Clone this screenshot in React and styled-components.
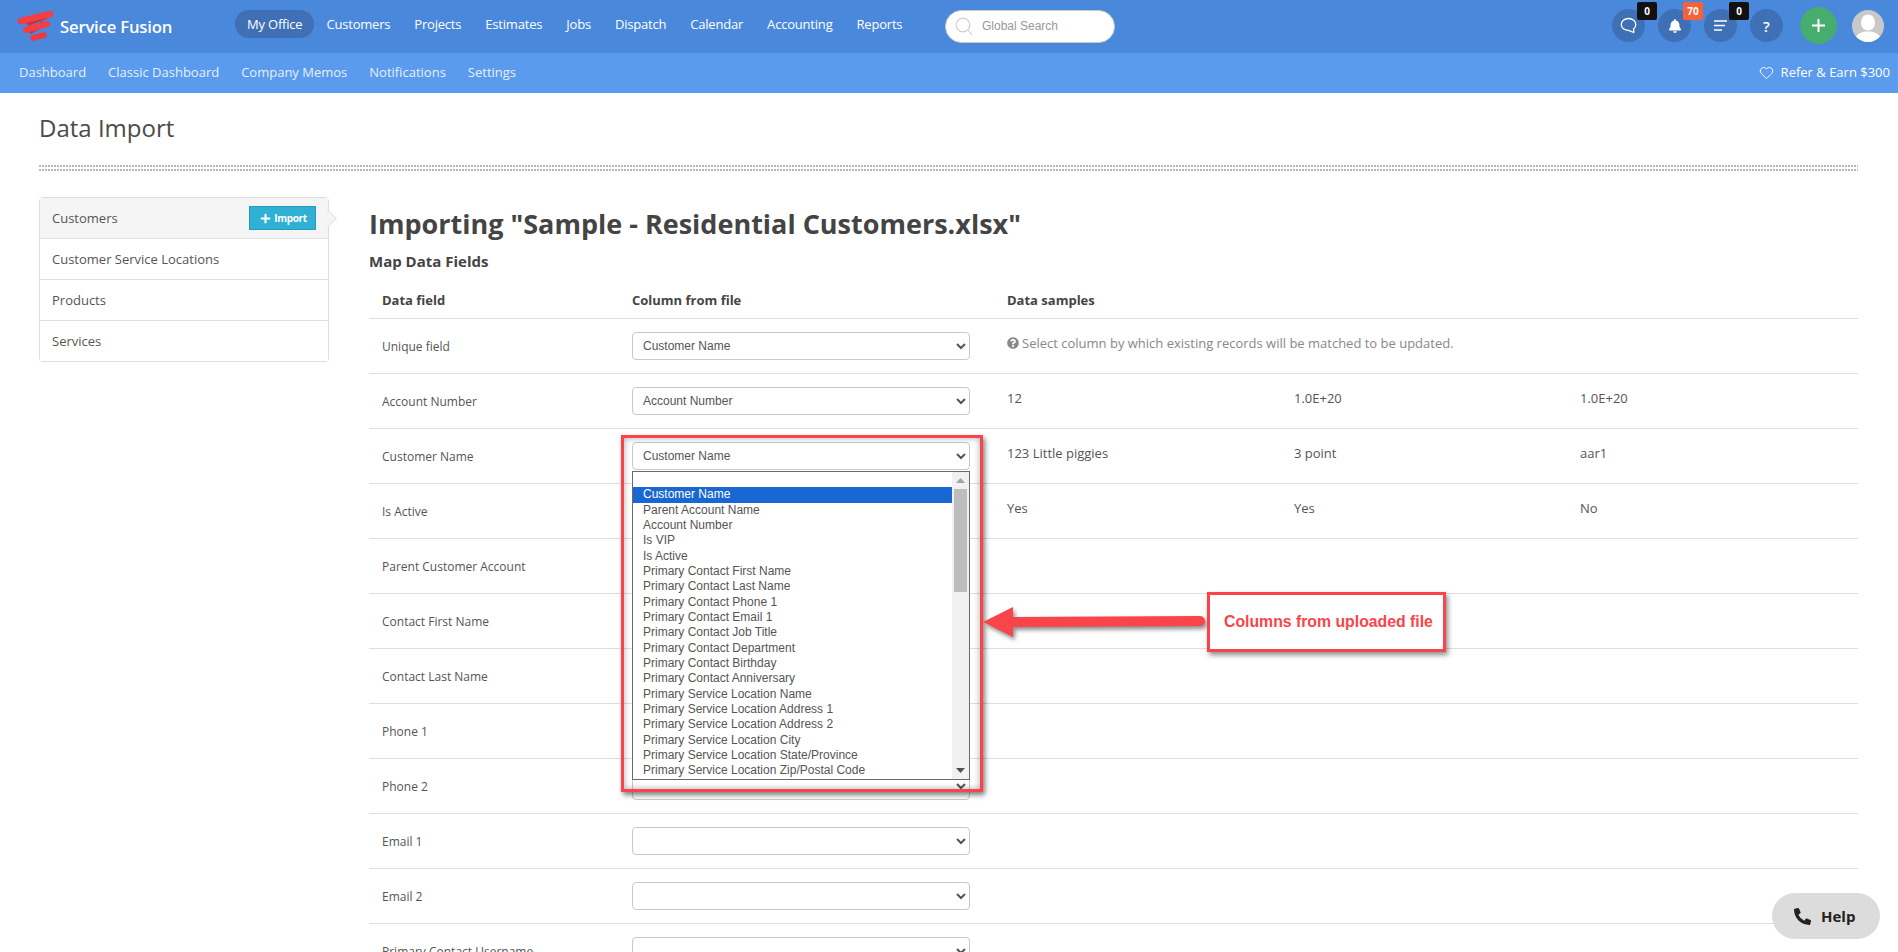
import React from 'react';
import styled, { createGlobalStyle } from 'styled-components';
import { FaBell, FaPhoneAlt, FaPlus, FaQuestionCircle } from 'react-icons/fa';
import { Heart } from 'lucide-react';

const GlobalStyle = createGlobalStyle`
  html, body {
    margin: 0;
    height: 100%;
    overflow: hidden;
    background: #fff;
    font-family: "Open Sans", sans-serif;
    color: #555;
  }
  * { box-sizing: border-box; }
`;

const Page = styled.div`
  position: relative;
  height: 952px;
  overflow: hidden;
`;

const TopBar = styled.header`
  display: flex;
  align-items: center;
  height: 53px;
  background: #4a88dc;
  padding-right: 14px;
`;

const Logo = styled.div`
  flex: 0 0 235px;
  display: flex;
  align-items: center;
  gap: 6px;
  padding-left: 17px;
  color: #fff;
  font-size: 16.7px;
  font-weight: 600;
  letter-spacing: -0.2px;
`;

const MainNav = styled.nav`
  flex: 0 0 710px;
  display: flex;
  align-items: center;
`;

const NavItem = styled.a`
  height: 28px;
  padding: 0 12px;
  border-radius: 14px;
  display: flex;
  align-items: center;
  margin-top: -6px;
  font-size: 13px;
  letter-spacing: -0.2px;
  color: #fff;
  background: ${p => (p.$active ? '#3f70b6' : 'transparent')};
`;

const Search = styled.div`
  width: 170px;
  height: 33px;
  margin-top: -1px;
  display: flex;
  align-items: center;
  gap: 9px;
  padding-left: 9px;
  background: #fff;
  border: 1px solid #ccc;
  border-radius: 17px;
  font-family: "Liberation Sans", sans-serif;
  font-size: 12px;
  color: #999;
`;

const TopRight = styled.div`
  margin-left: auto;
  margin-bottom: 2px;
  display: flex;
  align-items: center;
`;

const Round = styled.div`
  position: relative;
  width: 33px;
  height: 33px;
  margin-left: 13px;
  border-radius: 50%;
  background: #3f70b6;
  color: #fff;
  display: flex;
  align-items: center;
  justify-content: center;
  font-size: 15px;
  font-weight: 600;
`;

const Badge = styled.span`
  position: absolute;
  top: -7px;
  right: -12px;
  width: 20px;
  height: 18px;
  border-radius: 2px;
  background: ${p => p.$bg || '#111'};
  color: #fff;
  font-size: 10px;
  font-weight: 700;
  display: flex;
  align-items: center;
  justify-content: center;
`;

const AddButton = styled.div`
  width: 37px;
  height: 37px;
  margin-left: 17px;
  border-radius: 50%;
  background: #45ad6d;
  color: #fff;
  display: flex;
  align-items: center;
  justify-content: center;
`;

const Avatar = styled.div`
  width: 32px;
  height: 32px;
  margin-left: 15px;
  border-radius: 50%;
  overflow: hidden;
  background: #c9c9c9;
`;

const SubBar = styled.div`
  display: flex;
  align-items: center;
  height: 40px;
  padding: 0 8px 2px 19px;
  background: #5b9bed;
  font-size: 13px;
  color: #e6f0fc;
`;

const SubNav = styled.nav`
  display: flex;
  gap: 22px;
`;

const Refer = styled.div`
  margin-left: auto;
  display: flex;
  align-items: center;
  gap: 7px;
  font-size: 13px;
  color: #fff;
`;

const Content = styled.div`
  padding: 19px 40px 0 39px;
`;

const PageTitle = styled.h1`
  margin: 0;
  font-size: 24px;
  line-height: 32px;
  font-weight: 400;
  color: #4b4b4b;
`;

const Dots = styled.div`
  height: 8px;
  margin-top: 21px;
  background-image: radial-gradient(circle at 1px 1px, #b8b8b8 0.8px, transparent 1.1px);
  background-size: 3px 4px;
`;

const Columns = styled.div`
  display: flex;
  gap: 40px;
  margin-top: 24px;
`;

const SideMenu = styled.ul`
  flex: 0 0 290px;
  align-self: flex-start;
  margin: 0;
  padding: 0;
  list-style: none;
  border: 1px solid #ddd;
  border-radius: 4px;
`;

const SideItem = styled.li`
  position: relative;
  height: 41px;
  display: flex;
  align-items: center;
  justify-content: space-between;
  padding: 0 12px 0 12px;
  font-size: 13px;
  color: #555;
  background: ${p => (p.$active ? '#f5f5f5' : '#fff')};
  border-bottom: 1px solid #ddd;
  &:last-child { border-bottom: 0; height: 40px; }
  ${p => p.$active && `
    &::after {
      content: '';
      position: absolute;
      right: -6px;
      top: 14px;
      width: 12px;
      height: 12px;
      background: #f5f5f5;
      border-top: 1px solid #e4e4e4;
      border-right: 1px solid #e4e4e4;
      transform: rotate(45deg);
    }
  `}
`;

const ImportButton = styled.button`
  width: 67px;
  height: 24px;
  display: flex;
  align-items: center;
  justify-content: center;
  gap: 3px;
  padding: 0 0 0 2px;
  background: #31b0d5;
  border: 1px solid #269abc;
  color: #fff;
  font-family: inherit;
  font-size: 10px;
  font-weight: 700;
  letter-spacing: -0.3px;
`;

const Main = styled.main`
  flex: 1;
  min-width: 0;
`;

const Heading = styled.h2`
  margin: 7px 0 0;
  font-size: 27px;
  line-height: 40px;
  font-weight: 700;
  color: #444;
`;

const SubHeading = styled.h3`
  margin: 7px 0 0;
  font-size: 15px;
  line-height: 20px;
  font-weight: 700;
  color: #444;
`;

const Row = styled.div`
  display: grid;
  grid-template-columns: 263px 375px 287px 286px 1fr;
  align-items: center;
  height: ${p => (p.$head ? '48px' : '55px')};
  padding-top: ${p => (p.$head ? '11px' : '0')};
  border-bottom: 1px solid #ddd;
  font-size: 12px;
  color: #555;
`;

const HeadCell = styled.div`
  font-size: 13px;
  font-weight: 700;
  color: #444;
  padding-left: ${p => (p.$first ? '13px' : '0')};
`;

const FieldName = styled.div`
  padding-left: 13px;
`;

const ColumnSelect = styled.select`
  display: block;
  width: 338px;
  height: 28px;
  padding: 0 6px;
  background: #fff;
  border: 1px solid #c8c8c8;
  border-radius: 4px;
  font-family: "Liberation Sans", sans-serif;
  font-size: 12px;
  color: #555;
`;

const Sample = styled.div`
  padding-bottom: 7px;
  font-size: 13px;
  color: #555;
`;

const Hint = styled.div`
  grid-column: 3 / 6;
  display: flex;
  align-items: center;
  gap: 3px;
  padding-bottom: 7px;
  font-size: 13px;
  color: #888;
`;

const RedFrame = styled.div`
  position: absolute;
  left: 621px;
  top: 435px;
  width: 362px;
  height: 357px;
  padding: 33px 0 0 8px;
  border: 3px solid #f9444a;
  box-shadow: 2px 3px 5px rgba(0, 0, 0, 0.5), inset 0 0 6px rgba(0, 0, 0, 0.35);
`;

const ListBox = styled.div`
  display: flex;
  width: 338px;
  height: 309px;
  background: #fff;
  border: 1px solid #6a6a6a;
  font-family: "Liberation Sans", sans-serif;
  font-size: 12px;
  color: #555;
`;

const Options = styled.div`
  flex: 1;
  overflow: hidden;
`;

const Option = styled.div`
  height: 15.33px;
  line-height: 15.33px;
  padding-left: 10px;
  background: ${p => (p.$selected ? '#1967d2' : 'transparent')};
  color: ${p => (p.$selected ? '#fff' : '#555')};
`;

const ScrollTrack = styled.div`
  flex: 0 0 17px;
  display: flex;
  flex-direction: column;
  align-items: center;
  background: #f1f1f1;
`;

const ScrollArrow = styled.div`
  flex: 0 0 17px;
  display: flex;
  align-items: center;
  justify-content: center;
`;

const ScrollThumb = styled.div`
  width: 13px;
  height: 103px;
  background: #bdbdbd;
`;

const ScrollGap = styled.div`
  flex: 1;
`;

const ArrowSvg = styled.svg`
  position: absolute;
  left: 980px;
  top: 600px;
  overflow: visible;
  filter: drop-shadow(2px 3px 2px rgba(0, 0, 0, 0.45));
`;

const CalloutBox = styled.div`
  position: absolute;
  left: 1207px;
  top: 592px;
  width: 239px;
  height: 60px;
  display: flex;
  align-items: center;
  padding-left: 14px;
  background: #fff;
  border: 3px solid #f9444a;
  box-shadow: 2px 3px 5px rgba(0, 0, 0, 0.45);
  font-family: "Liberation Sans", sans-serif;
  font-size: 15.8px;
  font-weight: 700;
  color: #f9444a;
`;

const HelpButton = styled.div`
  position: absolute;
  left: 1772px;
  top: 893px;
  width: 108px;
  height: 46px;
  display: flex;
  align-items: center;
  gap: 10px;
  padding-left: 22px;
  border-radius: 23px;
  background: #dcdcdc;
  color: #222;
  font-size: 15px;
  font-weight: 700;
`;

const navItems = ['My Office', 'Customers', 'Projects', 'Estimates', 'Jobs', 'Dispatch', 'Calendar', 'Accounting', 'Reports'];
const subItems = ['Dashboard', 'Classic Dashboard', 'Company Memos', 'Notifications', 'Settings'];
const sideItems = ['Customers', 'Customer Service Locations', 'Products', 'Services'];

const fields = [
  { name: 'Unique field', value: 'Customer Name', hint: true },
  { name: 'Account Number', value: 'Account Number', samples: ['12', '1.0E+20', '1.0E+20'] },
  { name: 'Customer Name', value: 'Customer Name', samples: ['123 Little piggies', '3 point', 'aar1'] },
  { name: 'Is Active', samples: ['Yes', 'Yes', 'No'] },
  { name: 'Parent Customer Account' },
  { name: 'Contact First Name' },
  { name: 'Contact Last Name' },
  { name: 'Phone 1' },
  { name: 'Phone 2' },
  { name: 'Email 1' },
  { name: 'Email 2' },
  { name: 'Primary Contact Username' },
];

const fileColumns = [
  'Customer Name',
  'Parent Account Name',
  'Account Number',
  'Is VIP',
  'Is Active',
  'Primary Contact First Name',
  'Primary Contact Last Name',
  'Primary Contact Phone 1',
  'Primary Contact Email 1',
  'Primary Contact Job Title',
  'Primary Contact Department',
  'Primary Contact Birthday',
  'Primary Contact Anniversary',
  'Primary Service Location Name',
  'Primary Service Location Address 1',
  'Primary Service Location Address 2',
  'Primary Service Location City',
  'Primary Service Location State/Province',
  'Primary Service Location Zip/Postal Code',
];

function LogoMark() {
  return (
    <svg width="37" height="31" viewBox="0 0 37 31" fill="none" strokeLinecap="round">
      <path d="M28 6 L12 12 M26 13 L14 20" stroke="#c92f37" strokeWidth="5" />
      <path d="M4 10 L33 3" stroke="#f43d44" strokeWidth="6.5" />
      <path d="M9 19 L30 13" stroke="#f43d44" strokeWidth="6" />
      <path d="M16 27 L27 24" stroke="#ef383f" strokeWidth="5.5" />
    </svg>
  );
}

function SearchGlass() {
  return (
    <svg width="18" height="19" viewBox="0 0 18 19" fill="none" stroke="#cfcfcf" strokeWidth="1.2">
      <circle cx="8" cy="8" r="6.8" />
      <path d="M13 13 L17 18" />
    </svg>
  );
}

function ChatIcon() {
  return (
    <svg width="17" height="17" viewBox="0 0 17 17" fill="none" stroke="#fff" strokeWidth="1.3" strokeLinejoin="round">
      <path d="M8.5 1.5 C4.4 1.5 1.3 4 1.3 7.5 C1.3 11 4.4 13.3 8.5 13.3 L13.8 15.5 L13.6 11.8 C15 10.7 15.8 9.2 15.8 7.5 C15.8 4 12.6 1.5 8.5 1.5 Z" />
    </svg>
  );
}

function ListIcon() {
  return (
    <svg width="13" height="11" viewBox="0 0 13 11" stroke="#fff" strokeWidth="1.3">
      <path d="M0 1 H13 M0 5.5 H11 M0 10 H8" />
    </svg>
  );
}

function PlusIcon() {
  return (
    <svg width="13" height="13" viewBox="0 0 13 13" stroke="#fff" strokeWidth="2">
      <path d="M6.5 0 V13 M0 6.5 H13" />
    </svg>
  );
}

function PersonIcon() {
  return (
    <svg width="32" height="32" viewBox="0 0 32 32" fill="#fff">
      <ellipse cx="16" cy="12.5" rx="7" ry="8" />
      <path d="M3 32 C3 24 9 21.5 16 21.5 C23 21.5 29 24 29 32 Z" />
    </svg>
  );
}

function Triangle({ down }) {
  return (
    <svg width="9" height="5" viewBox="0 0 9 5" fill={down ? '#505050' : '#a3a3a3'}>
      <path d={down ? 'M0 0 H9 L4.5 5 Z' : 'M0 5 H9 L4.5 0 Z'} />
    </svg>
  );
}

function CalloutArrow() {
  return (
    <ArrowSvg width="226" height="40" viewBox="0 0 226 40" fill="#f9444a">
      <path d="M3 22 L33 7 L33 37 Z" />
      <path d="M30 22 L220 21" stroke="#f9444a" strokeWidth="10" strokeLinecap="round" />
    </ArrowSvg>
  );
}

export default function App() {
  return (
    <Page>
      <GlobalStyle />
      <TopBar>
        <Logo>
          <LogoMark />
          Service Fusion
        </Logo>
        <MainNav>
          {navItems.map((item, i) => (
            <NavItem key={item} $active={i === 0}>{item}</NavItem>
          ))}
        </MainNav>
        <Search>
          <SearchGlass />
          Global Search
        </Search>
        <TopRight>
          <Round>
            <ChatIcon />
            <Badge>0</Badge>
          </Round>
          <Round>
            <FaBell size={14} />
            <Badge $bg="#f4623a">70</Badge>
          </Round>
          <Round>
            <ListIcon />
            <Badge>0</Badge>
          </Round>
          <Round>?</Round>
          <AddButton><PlusIcon /></AddButton>
          <Avatar><PersonIcon /></Avatar>
        </TopRight>
      </TopBar>
      <SubBar>
        <SubNav>
          {subItems.map(item => <span key={item}>{item}</span>)}
        </SubNav>
        <Refer>
          <Heart size={15} strokeWidth={1.5} />
          Refer &amp; Earn $300
        </Refer>
      </SubBar>

      <Content>
        <PageTitle>Data Import</PageTitle>
        <Dots />
        <Columns>
          <SideMenu>
            {sideItems.map((item, i) => (
              <SideItem key={item} $active={i === 0}>
                {item}
                {i === 0 && (
                  <ImportButton><FaPlus size={11} /> Import</ImportButton>
                )}
              </SideItem>
            ))}
          </SideMenu>
          <Main>
            <Heading>Importing "Sample - Residential Customers.xlsx"</Heading>
            <SubHeading>Map Data Fields</SubHeading>
            <Row $head>
              <HeadCell $first>Data field</HeadCell>
              <HeadCell>Column from file</HeadCell>
              <HeadCell>Data samples</HeadCell>
            </Row>
            {fields.map(field => (
              <Row key={field.name}>
                <FieldName>{field.name}</FieldName>
                <ColumnSelect defaultValue={field.value || ''}>
                  <option value=""></option>
                  {fileColumns.map(col => <option key={col} value={col}>{col}</option>)}
                </ColumnSelect>
                {field.hint && (
                  <Hint>
                    <FaQuestionCircle size={12} />
                    Select column by which existing records will be matched to be updated.
                  </Hint>
                )}
                {field.samples && field.samples.map((s, i) => <Sample key={i}>{s}</Sample>)}
              </Row>
            ))}
          </Main>
        </Columns>
      </Content>

      <RedFrame>
        <ListBox>
          <Options>
            <Option />
            {fileColumns.map((col, i) => (
              <Option key={col} $selected={i === 0}>{col}</Option>
            ))}
          </Options>
          <ScrollTrack>
            <ScrollArrow><Triangle /></ScrollArrow>
            <ScrollThumb />
            <ScrollGap />
            <ScrollArrow><Triangle down /></ScrollArrow>
          </ScrollTrack>
        </ListBox>
      </RedFrame>
      <CalloutArrow />
      <CalloutBox>Columns from uploaded file</CalloutBox>
      <HelpButton><FaPhoneAlt size={17} /> Help</HelpButton>
    </Page>
  );
}
